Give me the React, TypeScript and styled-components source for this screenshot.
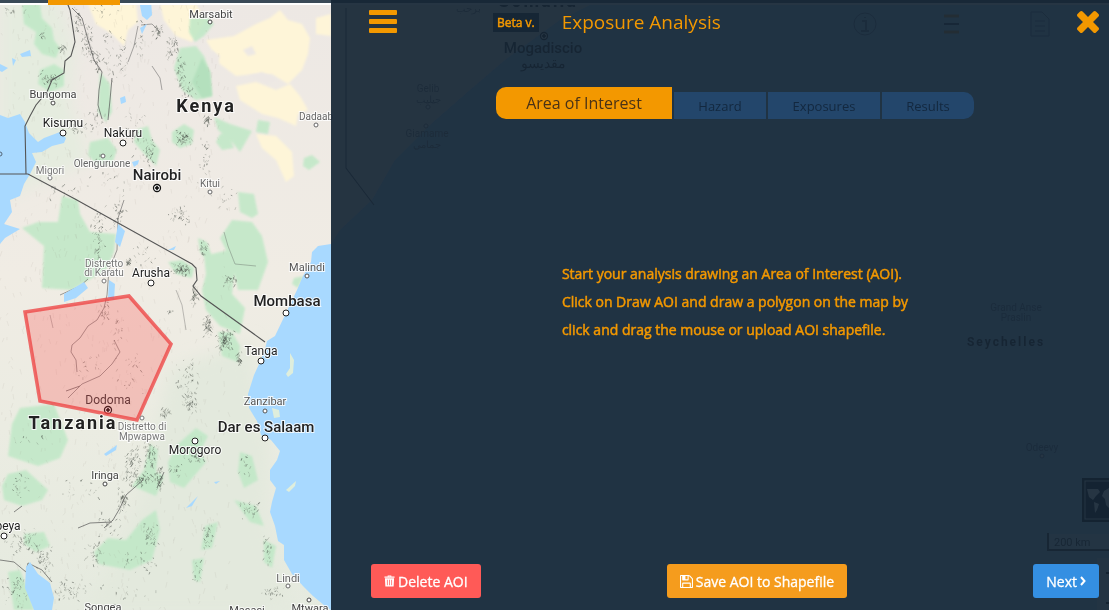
import React from "react";
import styled, { createGlobalStyle } from "styled-components";

const GlobalStyle = createGlobalStyle`
  * { box-sizing: border-box; }
  body { margin: 0; background: #203343; }
  button { font: inherit; cursor: pointer; }
`;

const orange = "#f39800";

const Page = styled.div`
  position: relative;
  display: grid;
  grid-template-columns: 331px 1fr;
  min-height: 100vh;
  overflow: hidden;
  font-family: "Open Sans", sans-serif;
`;

const MapCanvas = styled.svg`
  position: absolute;
  inset: 0;
  width: 100%;
  height: 100%;
  font-family: Roboto, sans-serif;
`;

const Panel = styled.section`
  grid-column: 2;
  position: relative;
  display: flex;
  flex-direction: column;
  padding: 0 10px 12px 38px;
  background: rgba(22, 38, 53, 0.93);
`;

const Header = styled.header`
  display: flex;
  align-items: center;
  height: 44px;
`;

const IconButton = styled.button`
  display: flex;
  padding: 0;
  border: 0;
  background: none;
  color: ${orange};
`;

const Beta = styled.span`
  margin-left: 96px;
  padding: 0 4px;
  background: #162635;
  color: ${orange};
  font-size: 12px;
  font-weight: 400;
  -webkit-text-stroke: 0.5px currentColor;
  line-height: 19px;
`;

const Title = styled.h1`
  margin: 0 auto 0 23px;
  color: ${orange};
  font-size: 19px;
  font-weight: 400;
  line-height: 28px;
`;

const Steps = styled.nav`
  display: flex;
  justify-content: center;
  align-items: flex-end;
  gap: 2px;
  margin: 43px 0 0 2px;
`;

const Step = styled.button<{ $active?: boolean; $width: number }>`
  width: ${(p) => p.$width}px;
  height: ${(p) => (p.$active ? 32 : 27)}px;
  padding: 0;
  border: 0;
  background: ${(p) => (p.$active ? orange : "#23466b")};
  color: ${(p) => (p.$active ? "#4a3216" : "#13283f")};
  font-size: ${(p) => (p.$active ? 16 : 13)}px;
  &:first-child { border-radius: 10px 0 0 10px; }
  &:last-child { border-radius: 0 10px 10px 0; }
`;

const Message = styled.p`
  align-self: center;
  margin: 141px 0 auto 2px;
  color: ${orange};
  font-size: 14px;
  font-weight: 400;
  -webkit-text-stroke: 0.5px currentColor;
  line-height: 28px;
`;

const Footer = styled.footer`
  display: flex;
  justify-content: space-between;
  padding-left: 2px;
`;

const Action = styled.button<{ $color: string }>`
  display: flex;
  align-items: center;
  gap: 3px;
  height: 34px;
  padding: 0 13px;
  border: 0;
  border-radius: 3px;
  background: ${(p) => p.$color};
  color: #fff;
  font-size: 14px;
  font-weight: 400;
  -webkit-text-stroke: 0.3px currentColor;
  white-space: nowrap;
`;

type Cluster = [number, number, number, number, number];

/* Relief hatching: x, y, half width, half height, number of strokes */
const relief: Cluster[] = [
  [78, 20, 5, 14, 34], [88, 40, 7, 18, 50], [96, 62, 6, 14, 40], [108, 50, 5, 28, 22],
  [120, 60, 9, 30, 30], [140, 35, 8, 30, 18], [158, 30, 5, 8, 34], [172, 48, 7, 12, 40],
  [180, 72, 6, 18, 38], [188, 90, 8, 10, 20], [43, 35, 4, 3, 12], [62, 48, 6, 4, 20],
  [50, 78, 12, 9, 45], [98, 120, 12, 12, 22], [78, 128, 16, 5, 22], [135, 130, 10, 28, 30],
  [150, 150, 8, 16, 44], [183, 137, 9, 8, 60], [207, 120, 4, 6, 30], [205, 160, 12, 24, 25],
  [225, 195, 18, 18, 18], [100, 225, 10, 25, 34], [118, 210, 8, 30, 34], [98, 250, 7, 20, 30],
  [62, 190, 18, 10, 16], [110, 170, 30, 20, 16], [180, 215, 12, 10, 40], [145, 255, 18, 12, 16],
  [129, 262, 4, 4, 24], [181, 269, 11, 7, 80], [204, 248, 5, 9, 24], [230, 280, 8, 8, 30],
  [195, 295, 5, 15, 44], [208, 325, 4, 14, 60], [225, 340, 9, 12, 110], [239, 358, 3, 8, 36],
  [105, 310, 7, 16, 24], [118, 330, 6, 22, 20], [90, 365, 15, 14, 16], [130, 375, 20, 25, 28],
  [170, 312, 3, 5, 8], [188, 380, 12, 22, 45], [190, 402, 10, 12, 55], [165, 412, 6, 6, 24],
  [28, 440, 15, 8, 8], [132, 460, 9, 16, 60], [150, 455, 8, 20, 60], [140, 478, 18, 9, 80],
  [160, 478, 4, 14, 50], [123, 500, 6, 14, 50], [195, 455, 12, 10, 50], [175, 470, 8, 8, 18],
  [20, 485, 10, 18, 22], [80, 490, 30, 12, 18], [110, 525, 15, 15, 35], [95, 550, 12, 18, 34],
  [25, 540, 20, 16, 60], [45, 560, 12, 18, 50], [70, 590, 22, 14, 50], [15, 590, 14, 18, 40],
  [150, 535, 8, 16, 38], [140, 560, 20, 15, 30], [208, 535, 7, 14, 30], [198, 570, 5, 12, 14],
  [250, 510, 12, 12, 28], [268, 550, 6, 18, 24], [272, 592, 12, 8, 24], [245, 465, 7, 12, 14],
  [15, 10, 14, 6, 12], [100, 10, 20, 8, 12], [120, 590, 40, 16, 16],
];

function makeRelief() {
  let seed = 7;
  const rnd = () => {
    seed = (seed * 16807) % 2147483647;
    return seed / 2147483647;
  };
  let dark = "";
  let soft = "";
  relief.forEach(([x, y, w, h, n]) => {
    for (let i = 0; i < n; i++) {
      const px = x + (rnd() + rnd() - 1) * w;
      const py = y + (rnd() + rnd() - 1) * h;
      const mark = `M${px.toFixed(1)} ${py.toFixed(1)}l${(rnd() * 4 - 2).toFixed(1)} ${(rnd() * 3).toFixed(1)}`;
      if (i % 3 === 0) dark += mark;
      else soft += mark;
    }
  });
  let grain = "";
  for (let i = 0; i < 900; i++) {
    grain += `M${(rnd() * 230).toFixed(0)} ${(rnd() * 610).toFixed(0)}l${(rnd() * 4 - 2).toFixed(1)} ${(2 + rnd() * 4).toFixed(1)}`;
  }
  return { dark, soft, grain };
}

const hatch = makeRelief();

const greens = [
  "22,4 40,4 42,18 52,28 54,40 60,48 56,58 42,54 34,44 36,32 24,24",
  "40,70 54,64 64,70 64,86 50,92 38,84",
  "100,72 110,84 112,112 106,122 98,112",
  "190,18 205,16 214,24 204,36 195,42 189,32",
  "180,48 196,46 204,56 210,72 212,96 196,100 182,90 174,68",
  "90,142 108,138 117,150 112,164 96,164 88,155",
  "136,130 148,126 152,140 160,150 156,166 146,156 134,142",
  "172,132 184,124 194,130 192,144 180,148 172,142",
  "214,117 230,124 252,131 240,152 232,142 218,130",
  "258,120 270,122 268,134 256,132",
  "220,134 228,134 234,148 222,150 216,142",
  "304,158 312,155 320,162 309,170 303,166",
  "62,196 78,200 80,214 90,232 116,234 114,252 106,270 92,278 72,290 42,288 44,246 22,228 38,222 58,222",
  "238,192 254,194 258,214 252,218 240,212",
  "232,220 252,222 262,236 268,262 258,290 238,290 232,262 220,238",
  "198,238 207,242 212,256 208,262 200,252",
  "204,256 228,250 236,262 232,294 245,308 240,334 220,326 206,310 202,290 206,274",
  "168,262 182,260 194,268 192,278 176,274",
  "218,332 232,332 240,346 238,362 222,356",
  "20,408 54,404 68,440 60,458 38,466 8,456 12,424",
  "8,474 26,470 48,490 42,500 22,506 4,500 2,486",
  "178,444 196,428 208,436 200,452 206,462 184,488 170,482 168,462",
  "150,444 158,450 156,472 164,476 156,496 132,486 144,470",
  "240,452 252,456 258,480 244,488 238,472",
  "142,520 156,510 160,530 152,560 130,570 98,564 94,552 108,538 126,540",
  "205,526 218,522 212,548 201,550",
  "264,540 276,546 272,568 264,562",
  "234,500 256,506 264,526 250,522",
  "24,534 44,532 50,546 36,552 24,544",
  "8,572 20,570 28,590 34,610 14,610",
  "192,560 204,558 200,582 194,580",
  "294,278 304,276 298,288 292,284",
];

const yellows = [
  "88,4 136,4 138,22 128,30 124,46 112,34 96,24",
  "160,4 196,4 206,20 192,42 176,36 164,20",
  "206,40 234,36 256,24 270,18 280,10 288,20 302,24 310,38 308,54 302,70 288,84 272,74 254,74 236,76 220,64 212,50",
  "236,86 256,82 276,90 290,84 300,96 308,110 298,114 296,126 278,118 262,114 240,100",
  "316,18 331,14 331,36 316,34",
  "256,134 276,136 292,152 294,176 286,182 276,160 262,148",
];

const lakes = [
  "0,115 8,118 20,114 25,122 29,133 38,142 44,138 60,132 66,138 64,143 52,146 42,152 32,153 36,162 30,174 24,184 20,196 10,200 12,212 4,224 20,229 5,238 0,244",
  "139,0 151,0 152,15 147,20 142,16", "140,28 147,24 142,34", "20,54 30,50 31,56 22,57",
  "0,64 8,68 2,72 0,71", "12,58 16,60 13,66", "120,98 125,96 126,102 121,104",
  "118,224 125,231 120,247 115,242 117,230", "64,294 84,282 88,288 76,298 64,302",
  "109,280 115,284 114,300 108,298", "132,162 139,160 138,164 134,167", "104,454 117,445 116,450 106,456",
  "26,567 30,562 38,574 50,583 54,598 52,610 34,610 25,588", "168,250 176,246 174,250", "186,508 198,496 192,506", "214,482 220,481 216,484",
];

const ocean =
  "600,0 560,20 505,60 470,90 430,125 395,160 372,200 340,230 331,244 318,246 312,252 311,262 303,276 297,290 285,315 275,336 267,341 265,349 260,362 254,375 248,394 249,408 257,421 261,435 271,440 280,451 277,460 270,470 270,480 276,488 272,502 270,512 275,526 278,541 284,545 284,560 292,574 303,586 313,596 325,606 331,610 1109,610 1109,0";

interface Place { t: string; x: number; y: number; s: number; c?: string; w?: number; dot?: [number, number, number]; ls?: number }

const places: Place[] = [
  { t: "Marsabit", x: 211, y: 18, s: 11, c: "#444", dot: [210, 22, 2] },
  { t: "Bungoma", x: 53, y: 98, s: 11, c: "#444", dot: [53, 103, 2] },
  { t: "Kisumu", x: 63, y: 127, s: 12, dot: [63, 133, 3] },
  { t: "Nakuru", x: 123, y: 137, s: 12, dot: [123, 143, 3] },
  { t: "Kenya", x: 206, y: 112, s: 18, w: 700, ls: 2 },
  { t: "Dadaab", x: 316, y: 120, s: 10, c: "#666", dot: [316, 125, 2] },
  { t: "Olenguruone", x: 102, y: 167, s: 10, c: "#666", dot: [103, 156, 2] },
  { t: "Migori", x: 50, y: 174, s: 10, c: "#777", dot: [50, 178, 2] },
  { t: "Nairobi", x: 157, y: 180, s: 15, w: 500 },
  { t: "Kitui", x: 210, y: 187, s: 10, c: "#666", dot: [210, 192, 2] },
  { t: "Distretto", x: 104, y: 267, s: 10, c: "#777" },
  { t: "di Karatu", x: 104, y: 276, s: 10, c: "#777", dot: [104, 281, 2] },
  { t: "Arusha", x: 151, y: 277, s: 12, dot: [151, 283, 3] },
  { t: "Malindi", x: 307, y: 271, s: 11, c: "#555", dot: [307, 276, 2] },
  { t: "Mombasa", x: 287, y: 306, s: 15, w: 500, dot: [286, 313, 3] },
  { t: "Tanga", x: 261, y: 355, s: 12, dot: [261, 361, 3] },
  { t: "Zanzibar", x: 265, y: 405, s: 11, c: "#555", dot: [265, 411, 2] },
  { t: "Dar es Salaam", x: 266, y: 432, s: 15, w: 500, dot: [265, 438, 3] },
  { t: "Distretto di", x: 142, y: 430, s: 10, c: "#777", dot: [142, 418, 2] },
  { t: "Mpwapwa", x: 142, y: 440, s: 10, c: "#777" },
  { t: "Tanzania", x: 73, y: 429, s: 18, w: 700, ls: 2 },
  { t: "Morogoro", x: 195, y: 454, s: 12, dot: [195, 441, 3] },
  { t: "Iringa", x: 105, y: 479, s: 11, c: "#444", dot: [105, 484, 2] },
  { t: "beya", x: 8, y: 530, s: 12, dot: [4, 536, 3] },
  { t: "Lindi", x: 288, y: 582, s: 11, c: "#666", dot: [288, 586, 2] },
  { t: "Songea", x: 103, y: 611, s: 11, c: "#444" },
  { t: "Masasi", x: 247, y: 614, s: 11, c: "#444" },
  { t: "Mtwara", x: 310, y: 612, s: 11, c: "#444", dot: [309, 600, 2] },
  { t: "Somalia", x: 538, y: 7, s: 18, w: 700, ls: 2 },
  { t: "Mogadiscio", x: 543, y: 53, s: 15, w: 500 },
  { t: "مقديسو", x: 543, y: 68, s: 14 },
  { t: "برحب", x: 468, y: 12, s: 10, c: "#777" },
  { t: "Gelib", x: 428, y: 92, s: 10, c: "#777" },
  { t: "جيليب", x: 428, y: 103, s: 10, c: "#777", dot: [428, 107, 2] },
  { t: "Giamame", x: 427, y: 137, s: 10, c: "#777", dot: [426, 126, 2] },
  { t: "جمامي", x: 427, y: 148, s: 10, c: "#777" },
  { t: "Grand Anse", x: 1016, y: 311, s: 10, c: "#5c748a" },
  { t: "Praslin", x: 1016, y: 321, s: 10, c: "#5c748a" },
  { t: "Seychelles", x: 1006, y: 346, s: 12, w: 700, ls: 2 },
  { t: "Odeevy", x: 1042, y: 451, s: 10, c: "#5c748a", dot: [1042, 456, 2] },
];

function Capital({ x, y }: { x: number; y: number }) {
  return (
    <g stroke="#111" fill="#fff">
      <circle cx={x} cy={y} r={3.5} strokeWidth={1.3} />
      <circle cx={x} cy={y} r={1.4} fill="#111" />
    </g>
  );
}

function RegionMap() {
  return (
    <MapCanvas viewBox="0 0 1109 610" preserveAspectRatio="xMinYMin slice" role="img" aria-label="Map of East Africa">
      <defs>
        <linearGradient id="land" x1="0" y1="0" x2="0" y2="1">
          <stop offset="0" stopColor="#ede8e4" />
          <stop offset="0.45" stopColor="#f0ece4" />
          <stop offset="0.7" stopColor="#ebece2" />
          <stop offset="1" stopColor="#e5eadf" />
        </linearGradient>
        <filter id="soften" x="-20%" y="-20%" width="140%" height="140%"><feGaussianBlur stdDeviation="0.8" /></filter>
        <filter id="haze" x="-50%" y="-50%" width="200%" height="200%"><feGaussianBlur stdDeviation="8" /></filter>
      </defs>
      <rect width="1109" height="610" fill="url(#land)" />
      <path d="M0 0H60L74 50 70 105 90 160 0 200z" fill="#e5ecdf" filter="url(#haze)" />
      <path d="M170 370 250 340 262 420 270 450 265 520 290 610H90L140 500z" fill="#e3e9dd" filter="url(#haze)" />
      <g fill="#fef5d8" filter="url(#soften)">{yellows.map((p) => <polygon key={p} points={p} />)}</g>
      <g fill="#bfe8c6" opacity=".85" filter="url(#soften)">{greens.map((p) => <polygon key={p} points={p} />)}</g>
      <polygon points="202,58 210,72 212,96 202,98 192,82" fill="#b4e0bd" filter="url(#soften)" />
      <path d="M243 50 252 46 256 54 248 56zM248 76 262 72 278 80 268 84zM212 50 220 56 216 70 208 60z" fill="#ede8e4" filter="url(#soften)" />
      <g fill="none" strokeWidth=".8">
        <path d={hatch.grain} stroke="#8b8378" opacity=".12" />
        <path d={hatch.soft} stroke="#6b7169" opacity=".4" />
        <path d={hatch.dark} stroke="#3d433d" opacity=".6" />
      </g>
      <g fill="none" stroke="#555" strokeWidth="1" opacity=".7">
        <path d="M72 8 82 18 88 40 94 60 102 72 99 90 98 105 102 119M112 78 110 100 108 120" />
        <path d="M138 26 134 46 128 62M141 25 152 24 160 32M152 66 160 78 162 90" opacity=".7" />
        <path d="M124 200 118 218 117 250 109 270 107 295 104 308M60 295 80 286 88 279M104 308 97 320 88 326 80 338 72 345 71 352 76 360 77 372M114 340 120 352 112 364 100 376 82 384 68 398" opacity=".8" />
        <path d="M176 290 182 305 186 330M50 315 53 328M224 232 228 246 235 264 256 266" opacity=".5" />
        <path d="M164 472 157 488M143 480 126 495 120 508 113 520 104 528M78 528 90 523 112 522M14 512 22 506M0 560 14 562 26 572 28 563 42 570 52 582M66 391 80 386" />
      </g>
      <polygon points={ocean} fill="#a8d9ff" />
      <g fill="#a8d9ff">{lakes.map((p) => <polygon key={p} points={p} />)}</g>
      <g fill="#dfeedc"><path d="M290 353 294 360 293 373 288 377 286 374 290 368z" /><path d="M286 490 296 481 295 486 289 492z" /><path d="M272 408 279 410 280 417 274 418z" /></g>
      <path d="M66 0 70 10 72 22 75 42 71 56 65 61 64 73 52 80 47 92 36 105 30 116 25 126 26 174M0 174H28L75 199 192 264 196 268 197 280 193 286 201 296 265 342M346 8V168L374 205" fill="none" stroke="#555" strokeWidth="1.1" />
      <text x="108" y="404" textAnchor="middle" fontSize="12" fill="#333">Dodoma</text>
      <Capital x={108} y={410} />
      <path d="M25 312 129 296 171 344 137 420 40 401z" fill="#ff4b4b" fillOpacity=".27" stroke="#ee3f3f" strokeOpacity=".75" strokeWidth="3.5" />
      <circle cx="0" cy="154" r="2" fill="none" stroke="#567" />
      {places.map((p) => (
        <g key={p.t}>
          {p.dot && <circle cx={p.dot[0]} cy={p.dot[1]} r={p.dot[2]} fill="#fff" stroke={p.c || "#222"} />}
          <text x={p.x} y={p.y} textAnchor="middle" fontSize={p.s} fontWeight={p.w || 400} letterSpacing={p.ls} fill={p.c || "#222"} stroke="#fff" strokeWidth="2" strokeOpacity={p.x > 331 ? 0 : 0.8} paintOrder="stroke">{p.t}</text>
        </g>
      ))}
      <Capital x={157} y={188} />
      <Capital x={544} y={36} />
      {/* Controls of the map */}
      <g fill="none" stroke="#8ca4b8" strokeWidth="1">
        <g stroke="#64809a"><circle cx="865" cy="24" r="11" /><path d="M862 21H866V31M861 31H869M865 17V18" strokeWidth="2" /></g>
        <path d="M944 16H959M944 32H959" stroke="#d08a30" strokeWidth="3" /><path d="M944 24H959" stroke="#2c4355" strokeWidth="2" />
        <path d="M1031 12H1042L1049 19V36H1031zM1035 21H1045M1035 26H1045M1035 31H1045" stroke="#64809a" />
      </g>
      <rect x="1083" y="479" width="42" height="42" fill="#05121e" stroke="#000" strokeWidth="2" />
      <rect x="1085" y="481" width="38" height="38" fill="#001" stroke="#eee" />
      <path d="M1087 489H1098L1100 492 1096 496 1093 500 1089 497zM1094 502 1099 504 1097 510 1095 513zM1104 491 1109 488V508L1106 505 1105 499 1102 496z" fill="#fff" />
      <rect x="1048" y="534" width="61" height="16" fill="#cbeaff" /><path d="M1048 533V550H1109" fill="none" stroke="#333" strokeWidth="2" />
      <text x="1054" y="546" fontSize="11" fill="#333">200 km</text>
      <path d="M1097 558H1109V610H1097z" fill="#cbeaff" /><path d="M1106 573H1109M1106 603H1109" stroke="#000" strokeWidth="2" />
      {/* Bottom edge of the site navigation with its current item */}
      <rect width="1109" height="3" fill="#3a4a57" />
      <rect y="3" width="1109" height="2" fill="#fff" />
      <rect x="48" width="72" height="5" fill={orange} />
    </MapCanvas>
  );
}

const TrashIcon = () => (
  <svg width="11" height="12" viewBox="0 0 12 12" fill="currentColor" aria-hidden="true">
    <path fillRule="evenodd" d="M4 0H8V1H11.500V2.500H.5V1H4zM5 .7V1H7V.7zM1 3H11L10.500 12H1.500zM3.200 4.500V10.500H4V4.500zM5.600 4.500V10.500H6.400V4.500zM8 4.500V10.500H8.800V4.500z" />
  </svg>
);

const SaveIcon = () => (
  <svg width="13" height="13" viewBox="0 128 1536 1536" fill="currentColor" aria-hidden="true">
    <path d="M384 1536h768v-384H384v384zm896 0h128V640q0-14-10-38.500t-20-34.500l-281-281q-10-10-34-20t-39-10v416q0 40-28 68t-68 28H352q-40 0-68-28t-28-68V256H128v1280h128v-416q0-40 28-68t68-28h832q40 0 68 28t28 68v416zM896 608V288q0-13-9.500-22.500T864 256H672q-13 0-22.500 9.500T640 288v320q0 13 9.500 22.500t22.500 9.500h192q13 0 22.500-9.500T896 608zm640 32v928q0 40-28 68t-68 28H96q-40 0-68-28t-28-68V224q0-40 28-68t68-28h928q40 0 88 20t76 48l280 280q28 28 48 76t20 88z" />
  </svg>
);

const NextIcon = () => (
  <svg width="6" height="10" viewBox="0 0 6 10" fill="none" stroke="currentColor" strokeWidth="2" aria-hidden="true"><path d="M1 1 4.500 5 1 9" /></svg>
);

export default function App() {
  return (
    <>
      <GlobalStyle />
      <Page>
        <RegionMap />
        <Panel>
          <Header>
            <IconButton aria-label="Menu">
              <svg width="28" height="24" viewBox="0 0 28 24" fill="currentColor"><rect width="28" height="5" rx="1" /><rect y="9" width="28" height="5" rx="1" /><rect y="18" width="28" height="5" rx="1" /></svg>
            </IconButton>
            <Beta>Beta v.</Beta>
            <Title>Exposure Analysis</Title>
            <IconButton aria-label="Close">
              <svg width="22" height="22" viewBox="110 366 1188 1188" fill="currentColor"><path d="M1298 1322q0 40-28 68l-136 136q-28 28-68 28t-68-28L704 1232l-294 294q-28 28-68 28t-68-28l-136-136q-28-28-28-68t28-68l294-294-294-294q-28-28-28-68t28-68l136-136q28-28 68-28t68 28l294 294 294-294q28-28 68-28t68 28l136 136q28 28 28 68t-28 68L976 960l294 294q28 28 28 68z" /></svg>
            </IconButton>
          </Header>
          <Steps aria-label="Analysis steps">
            <Step $active $width={176} aria-current="step">Area of Interest</Step>
            <Step $width={92}>Hazard</Step>
            <Step $width={112}>Exposures</Step>
            <Step $width={92}>Results</Step>
          </Steps>
          <Message>
            Start your analysis drawing an Area of Interest (AOI).<br />
            Click on Draw AOI and draw a polygon on the map by<br />
            click and drag the mouse or upload AOI shapefile.
          </Message>
          <Footer>
            <Action $color="#ff5a57"><TrashIcon />Delete AOI</Action>
            <Action $color="#f59c1d"><SaveIcon />Save AOI to Shapefile</Action>
            <Action $color="#348fe2">Next<NextIcon /></Action>
          </Footer>
        </Panel>
      </Page>
    </>
  );
}
